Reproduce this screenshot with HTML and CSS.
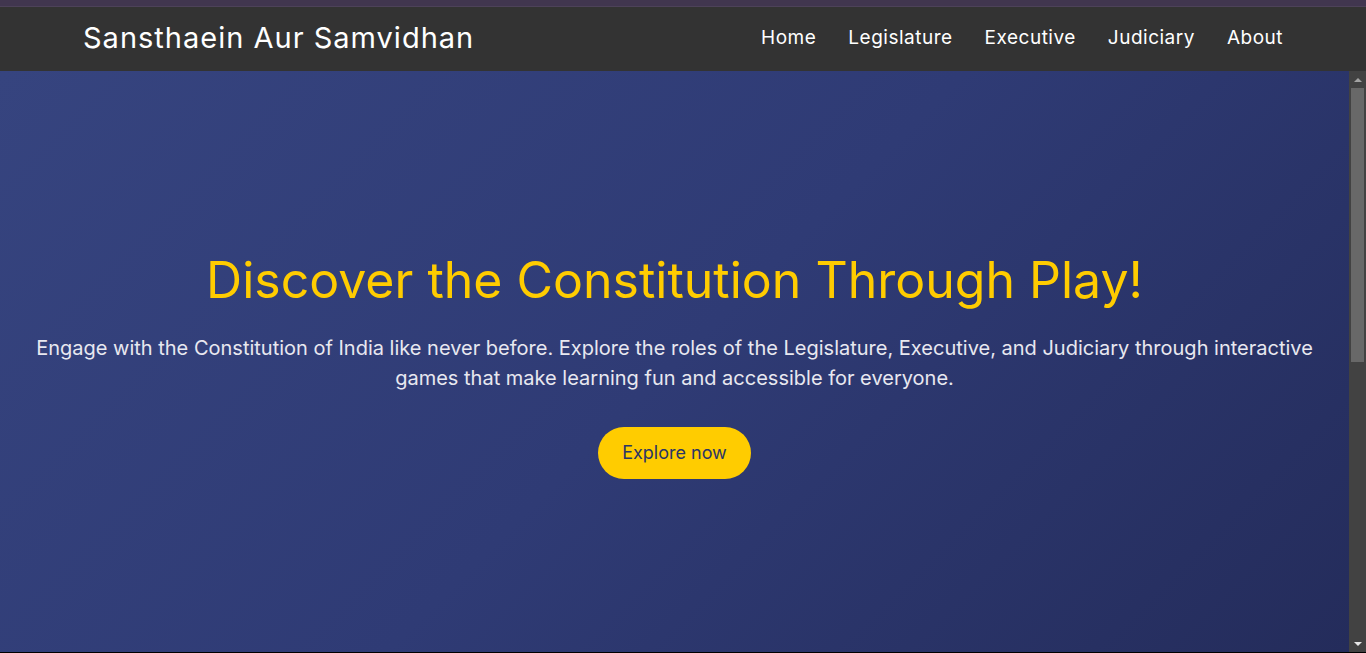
FILE: index.html
```html
<!DOCTYPE html>
<html lang="en">
<head>
<meta charset="utf-8">
<title>Sansthaein Aur Samvidhan</title>
<link rel="stylesheet" href="styles.css">
</head>
<body>
<div class="topstrip"></div>
<header class="navbar">
  <div class="nav-inner">
    <a class="brand" href="#">Sansthaein Aur Samvidhan</a>
    <nav class="links">
      <a href="#">Home</a>
      <a href="#">Legislature</a>
      <a href="#">Executive</a>
      <a href="#">Judiciary</a>
      <a href="#">About</a>
    </nav>
  </div>
</header>
<div class="frame">
  <main class="viewport">
    <section class="hero">
      <h1 class="hero-title">Discover the Constitution Through Play!</h1>
      <p class="hero-text">Engage with the Constitution of India like never before. Explore the roles of the Legislature, Executive, and Judiciary through interactive games that make learning fun and accessible for everyone.</p>
      <a class="btn" href="#">Explore now</a>
    </section>
    <section class="more"></section>
  </main>
  <div class="scrollbar" aria-hidden="true">
    <div class="sb-btn"><span class="arrow-up"></span></div>
    <div class="sb-track"><div class="sb-thumb"></div></div>
    <div class="sb-btn"><span class="arrow-down"></span></div>
  </div>
</div>
</body>
</html>
```
FILE: styles.css
```css
* { box-sizing: border-box; }
html, body { height: 100%; }
body {
  margin: 0;
  display: flex;
  flex-direction: column;
  overflow: hidden;
  font-family: Inter, "Open Sans", sans-serif;
  background: #000;
}
.topstrip {
  height: 7px;
  background: #41364f;
  border-bottom: 1px solid #4d4259;
  flex: none;
}
.navbar {
  flex: none;
  height: 64px;
  background: #333333;
}
.nav-inner {
  max-width: 1200px;
  height: 100%;
  margin: 0 auto;
  display: flex;
  align-items: center;
  justify-content: space-between;
  padding-bottom: 4px;
}
.brand {
  color: #fff;
  text-decoration: none;
  font-size: 29px;
  letter-spacing: 1px;
}
.links { display: flex; gap: 32px; }
.links a {
  color: #fff;
  text-decoration: none;
  font-size: 19px;
  letter-spacing: 0.5px;
}
.frame {
  flex: 1;
  min-height: 0;
  display: flex;
  border-bottom: 1px solid #000;
}
.viewport {
  flex: 1;
  min-width: 0;
  overflow: hidden;
}
.hero {
  height: 100%;
  display: flex;
  flex-direction: column;
  align-items: center;
  justify-content: center;
  text-align: center;
  padding: 6px 32px 0;
  background: linear-gradient(135deg, #36447f 0%, #2f3b75 50%, #242c5b 100%);
}
.hero-title {
  margin: 0 0 23px;
  font-size: 50px;
  font-weight: 400;
  color: #ffcc00;
}
.hero-text {
  margin: 0 0 34px;
  font-size: 20px;
  line-height: 30px;
  color: #e8e8f0;
}
.btn {
  display: inline-block;
  padding: 15px 24px;
  border-radius: 26px;
  background: #ffcc00;
  color: #2b3566;
  font-size: 18px;
  line-height: 22px;
  text-decoration: none;
}
.more {
  height: 100%;
  background: linear-gradient(135deg, #2f3b75 0%, #242c5b 100%);
}
.scrollbar {
  flex: none;
  width: 17px;
  display: flex;
  flex-direction: column;
  background: #424242;
}
.sb-btn {
  flex: none;
  height: 17px;
  display: flex;
  align-items: center;
  justify-content: center;
}
.arrow-up, .arrow-down {
  width: 0;
  height: 0;
  border-left: 4px solid transparent;
  border-right: 4px solid transparent;
}
.arrow-up { border-bottom: 4px solid #a3a3a3; }
.arrow-down { border-top: 4px solid #e6e6e6; }
.sb-track {
  flex: 1;
  padding: 0 2px;
}
.sb-thumb {
  height: 50%;
  background: #686868;
}
```
